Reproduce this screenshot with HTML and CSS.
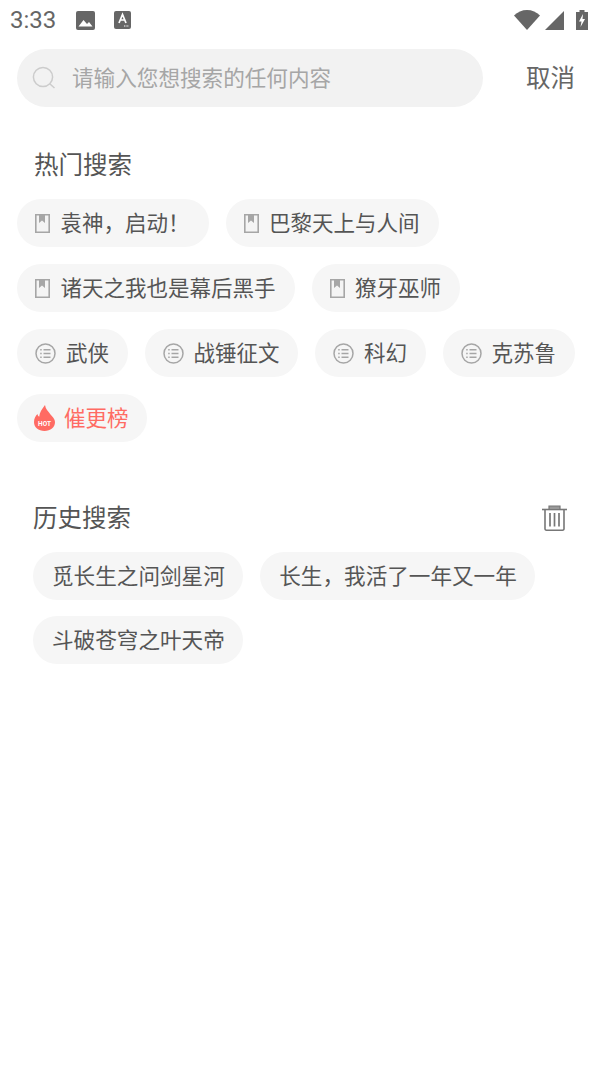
FILE: index.html
```html
<!DOCTYPE html>
<html lang="zh">
<head>
    <meta charset="UTF-8">
    <meta name="viewport" content="width=device-width, initial-scale=1.0">
    <title>搜索</title>
    <link rel="stylesheet" href="styles.css">
</head>
<body>
    <svg class="defs" width="0" height="0">
        <symbol id="book" viewBox="0 0 15 19">
            <path d="M.8.8h13.400v17.400H.8z" fill="#f4f4f4" stroke="#a6a6a6" stroke-width="1.600"/>
            <path d="M4 1h6v8L7 6.500 4 9z" fill="#a6a6a6"/>
        </symbol>
        <symbol id="list" viewBox="0 0 21 21">
            <circle cx="10.500" cy="10.500" r="9.500" fill="none" stroke="#a6a6a6" stroke-width="1.500"/>
            <path d="M8.500 6.800h7M8.500 10.500h7M8.500 14.200h7M5.200 6.800h1.500M5.200 10.500h1.500M5.200 14.200h1.500" stroke="#a6a6a6" stroke-width="1.400"/>
        </symbol>
    </svg>

    <div class="statusbar">
        <span class="clock">3:33</span>
        <svg class="st-photo" width="19" height="19" viewBox="0 0 19 19">
            <rect width="19" height="19" rx="2" fill="#666"/>
            <path d="M2.500 15.500l5-6.500 3.500 4 2-2 3.500 4.500z" fill="#fff"/>
        </svg>
        <svg class="st-font" width="17" height="18" viewBox="0 0 17 18">
            <rect width="17" height="18" rx="2" fill="#666"/>
            <path d="M5 12L8.500 3.500 12 12M6.300 9h4.400" fill="none" stroke="#fff" stroke-width="1.700"/>
            <path d="M10 15h5" stroke="#fff" stroke-width="1.200" stroke-dasharray="1 .6"/>
        </svg>
        <span class="st-right">
            <svg width="26" height="20" viewBox="0 0 26 20"><path d="M0 5.500C3.500 2 8 0 13 0s9.500 2 13 5.500L13 20z" fill="#666"/></svg>
            <svg width="19" height="19" viewBox="0 0 19 19"><path d="M19 0v19H0z" fill="#666"/></svg>
            <svg class="st-batt" width="12" height="20" viewBox="0 0 12 20"><path d="M3.500 0h5v2H12v18H0V2h3.500z" fill="#666"/><path d="M7 4L3 11.500h2.500L4.500 17 9 9H6.500z" fill="#fff"/></svg>
        </span>
    </div>

    <div class="searchrow">
        <div class="searchbox">
            <svg width="24" height="24" viewBox="0 0 24 24">
                <circle cx="11" cy="11" r="9.600" fill="none" stroke="#ccc" stroke-width="1.500"/>
                <path d="M18 18l4.500 4" stroke="#ccc" stroke-width="1.500"/>
            </svg>
            <span>请输入您想搜索的任何内容</span>
        </div>
        <span class="cancel">取消</span>
    </div>

    <h2 class="title hot-title">热门搜索</h2>
    <div class="tags">
        <div class="tag-row">
            <div class="tag"><svg class="ic-book"><use href="#book"/></svg>袁神&#xFF0C;启动&#xFF01;</div>
            <div class="tag"><svg class="ic-book"><use href="#book"/></svg>巴黎天上与人间</div>
        </div>
        <div class="tag-row">
            <div class="tag"><svg class="ic-book"><use href="#book"/></svg>诸天之我也是幕后黑手</div>
            <div class="tag"><svg class="ic-book"><use href="#book"/></svg>獠牙巫师</div>
        </div>
        <div class="tag-row">
            <div class="tag cat"><svg class="ic-list"><use href="#list"/></svg>武侠</div>
            <div class="tag cat"><svg class="ic-list"><use href="#list"/></svg>战锤征文</div>
            <div class="tag cat"><svg class="ic-list"><use href="#list"/></svg>科幻</div>
            <div class="tag cat"><svg class="ic-list"><use href="#list"/></svg>克苏鲁</div>
        </div>
        <div class="tag-row">
            <div class="tag rank">
                <svg class="ic-fire" width="21" height="26" viewBox="0 0 21 26">
                    <path d="M11 0c.5 4 3 6 5.500 9.500C18.500 12 21 14 21 17c0 5.500-4.500 9-10.500 9S0 22.500 0 17c0-3.500 1.500-6 3.500-8 .2 1.500.8 2.300 1.700 2.800C5.500 7.500 8 4 11 0z" fill="#ff6b63"/>
                    <text x="10.500" y="20.500" class="hot-text">HOT</text>
                </svg>
                催更榜
            </div>
        </div>
    </div>

    <div class="title-row">
        <h2 class="title">历史搜索</h2>
        <svg class="trash" width="25" height="26" viewBox="0 0 25 26">
            <path d="M0 4.500h25" stroke="#777" stroke-width="1.600"/>
            <path d="M7 4V1h11v3" fill="#999" stroke="#777" stroke-width="1.200"/>
            <path d="M3 5v19a1.500 1.500 0 0 0 1.500 1.200h16a1.500 1.500 0 0 0 1.500-1.200V5" fill="none" stroke="#777" stroke-width="1.600"/>
            <path d="M8 8v13.500M12.500 8v13.500M17 8v13.500" stroke="#777" stroke-width="1.700"/>
        </svg>
    </div>
    <div class="tags history">
        <div class="tag-row">
            <div class="tag">觅长生之问剑星河</div>
            <div class="tag">长生&#xFF0C;我活了一年又一年</div>
        </div>
        <div class="tag-row">
            <div class="tag">斗破苍穹之叶天帝</div>
        </div>
    </div>
</body>
</html>
```

FILE: styles.css
```css
* {
    box-sizing: border-box;
}

body {
    margin: 0;
    background: #fff;
    font-family: "Roboto", "Noto Sans CJK SC", sans-serif;
    color: #555;
}

.defs {
    display: block;
    height: 0;
}

.statusbar {
    display: flex;
    align-items: center;
    height: 40px;
    padding: 0 10px;
}

.clock {
    font-size: 24px;
    color: #666;
    width: 66px;
}

.st-font {
    margin-left: 19px;
}

.st-right {
    margin-left: auto;
    display: flex;
    align-items: center;
    gap: 5px;
    padding-right: 2px;
}

.st-batt {
    margin-left: 7px;
}

.searchrow {
    display: flex;
    align-items: center;
    padding: 9px 0 0 17px;
}

.searchbox {
    display: flex;
    align-items: center;
    width: 466px;
    height: 58px;
    border-radius: 29px;
    background: #f2f2f2;
    padding-left: 15px;
    font-size: 21.600px;
    color: #a6a6a6;
}

.searchbox span {
    margin-left: 16px;
    padding-bottom: 3px;
}

.cancel {
    margin-left: 43px;
    font-size: 24.500px;
    color: #666;
    padding-bottom: 3px;
}

.title {
    margin: 0;
    font-size: 24.500px;
    font-weight: 400;
    line-height: 34px;
    color: #555;
}

.hot-title {
    margin: 42px 0 0 34px;
}

.tags {
    display: flex;
    flex-direction: column;
    gap: 17px;
    padding: 16px 0 0 17px;
}

.tag-row {
    display: flex;
    gap: 17px;
}

.tag {
    display: flex;
    align-items: center;
    height: 48px;
    border-radius: 24px;
    background: #f6f6f6;
    padding: 0 19px 3px 18px;
    font-size: 21.500px;
    color: #555;
}

.ic-book {
    width: 15px;
    height: 19px;
    margin: 3px 10.500px 0 0;
}

.ic-list {
    width: 21px;
    height: 21px;
    margin: 3px 10px 0 0;
}

.cat {
    padding-right: 18.500px;
}

.rank {
    color: #ff6b63;
    padding-left: 17px;
    padding-right: 18px;
}

.ic-fire {
    margin: 3px 9px 0 0;
}

.hot-text {
    font-family: "Roboto", sans-serif;
    font-size: 6.500px;
    font-weight: 700;
    fill: #fff;
    text-anchor: middle;
}

.title-row {
    display: flex;
    align-items: center;
    justify-content: space-between;
    margin-top: 60px;
    padding: 0 33px;
}

.trash {
    margin-bottom: 2px;
}

.history {
    gap: 16px;
    padding-left: 33px;
}

.history .tag {
    padding: 0 18.500px 4px 19px;
    font-size: 21.600px;
}
```
